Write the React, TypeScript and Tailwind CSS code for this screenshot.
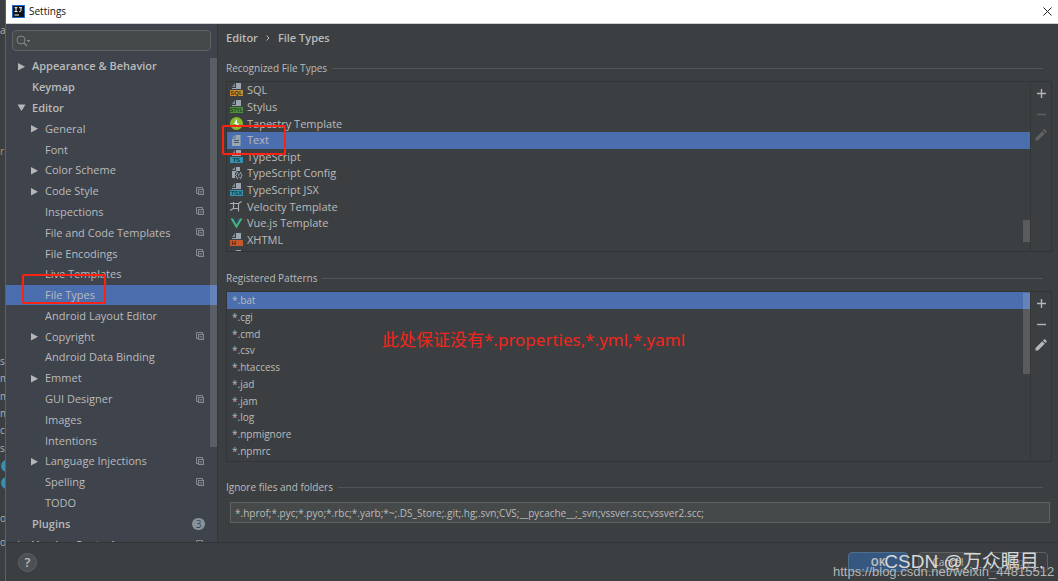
import React from "react";

type TreeRow = {
  label: string;
  level: 0 | 1;
  arrow?: "right" | "down";
  shared?: boolean;
  badge?: string;
  selected?: boolean;
};

const tree: TreeRow[] = [
  { label: "Appearance & Behavior", level: 0, arrow: "right" },
  { label: "Keymap", level: 0 },
  { label: "Editor", level: 0, arrow: "down" },
  { label: "General", level: 1, arrow: "right" },
  { label: "Font", level: 1 },
  { label: "Color Scheme", level: 1, arrow: "right" },
  { label: "Code Style", level: 1, arrow: "right", shared: true },
  { label: "Inspections", level: 1, shared: true },
  { label: "File and Code Templates", level: 1, shared: true },
  { label: "File Encodings", level: 1, shared: true },
  { label: "Live Templates", level: 1 },
  { label: "File Types", level: 1, selected: true },
  { label: "Android Layout Editor", level: 1 },
  { label: "Copyright", level: 1, arrow: "right", shared: true },
  { label: "Android Data Binding", level: 1 },
  { label: "Emmet", level: 1, arrow: "right" },
  { label: "GUI Designer", level: 1, shared: true },
  { label: "Images", level: 1 },
  { label: "Intentions", level: 1 },
  { label: "Language Injections", level: 1, arrow: "right", shared: true },
  { label: "Spelling", level: 1, shared: true },
  { label: "TODO", level: 1 },
  { label: "Plugins", level: 0, badge: "3" },
  { label: "Version Control", level: 0, arrow: "right", shared: true },
];

function Arrow({ dir }: { dir: "right" | "down" }) {
  return (
    <svg width="9" height="9" viewBox="0 0 9 9" fill="#b4b6b8" aria-hidden="true">
      {dir === "right" ? <path d="M1 1v7.500L8 4.700z" /> : <path d="M.5 1.500h8L4.500 8z" />}
    </svg>
  );
}

function SharedIcon() {
  return (
    <svg width="9" height="9" viewBox="0 0 9 9" fill="none" stroke="#858a91" aria-hidden="true">
      <path d="M2 6.500H.5v-6h6V2" />
      <rect x="2.500" y="2.500" width="5" height="5" />
      <path d="M3.500 4.500h3M3.500 6h3" strokeWidth=".7" />
    </svg>
  );
}

function FileShape() {
  return (
    <>
      <path d="M6 0h5v6H2V5h4z" fill="#9aa7b0" />
      <path d="M5 0v4H2z" fill="#9aa7b0" opacity=".7" />
    </>
  );
}

function Tagged({ color, tag, ink }: { color: string; tag: string; ink: string }) {
  return (
    <svg width="13" height="14" viewBox="0 0 13 14" aria-hidden="true">
      <FileShape />
      <rect x="0" y="7" width="13" height="6" fill={color} />
      <text
        x={tag.length === 1 ? 1.5 : 6.5}
        y="12.300"
        textAnchor={tag.length === 1 ? "start" : "middle"}
        fontSize={tag.length === 4 ? 5 : 6}
        fontWeight="700"
        fontFamily="Liberation Sans, sans-serif"
        fill={ink}
      >
        {tag}
      </text>
    </svg>
  );
}

function TypeIcon({ kind }: { kind: string }) {
  switch (kind) {
    case "sql":
      return <Tagged color="#c48a34" tag="SQL" ink="#4b3411" />;
    case "styl":
      return <Tagged color="#4c9040" tag="STYL" ink="#1d3d18" />;
    case "ts":
      return <Tagged color="#3591b1" tag="TS" ink="#123d4c" />;
    case "tsx":
      return <Tagged color="#3591b1" tag="TSX" ink="#123d4c" />;
    case "h":
      return <Tagged color="#c3582b" tag="H" ink="#4a1e0c" />;
    case "tapestry":
      return (
        <svg width="13" height="13" viewBox="0 0 13 13" aria-hidden="true">
          <circle cx="6.500" cy="6.500" r="6.500" fill="#84b92b" />
          <path d="M7 1.500L4 7h2.500v4L9 6.500H7z" fill="#fff" />
        </svg>
      );
    case "text":
      return (
        <svg width="13" height="13" viewBox="0 0 13 13" aria-hidden="true">
          <path d="M5.500 1H10.500v11H2V5h3.500z" fill="#9aa7b0" />
          <path d="M4.700 1v3.200H2z" fill="#9aa7b0" opacity=".8" />
          <path d="M4 6.500h5M4 8.500h5" stroke="#3f4a5f" strokeWidth=".9" />
        </svg>
      );
    case "config":
      return (
        <svg width="13" height="14" viewBox="0 0 13 14" fill="none" aria-hidden="true">
          <path d="M6 1h4v4H7L5 7v5H2V5h4z" fill="#9aa7b0" />
          <path d="M5 1v3H2z" fill="#9aa7b0" opacity=".8" />
          <path
            d="M7.800 6.300c-1.500 0-.7 2.200-2 3.200 1.300 1 .5 3.200 2 3.200M10 6.300c1.500 0 .7 2.200 2 3.200-1.300 1-.5 3.200-2 3.200M8.900 7.500v2.200M8.900 10.800v1"
            stroke="#b3bcc3"
          />
        </svg>
      );
    case "velocity":
      return (
        <svg width="13" height="13" viewBox="0 0 13 13" fill="none" stroke="#aab0b5" aria-hidden="true">
          <path d="M0 3.500h3.500M3.500 2v6.500h5v-5h-5M8.500 3.500l3-2M8.500 3v8.500M0 10.500l3.500-2" strokeWidth="1.100" />
        </svg>
      );
    case "vue":
      return (
        <svg width="13" height="13" viewBox="0 0 13 13" aria-hidden="true">
          <path d="M.5 1.500h3l3 5.500 3-5.500h3l-6 10z" fill="#41b883" />
          <path d="M3 1.500h2.200l1.300 2.300 1.300-2.300H10L6.500 7.700z" fill="#35495e" />
        </svg>
      );
    default:
      return (
        <svg width="13" height="14" viewBox="0 0 13 14" aria-hidden="true">
          <FileShape />
        </svg>
      );
  }
}

const fileTypes: [string, string][] = [
  ["sql", "SQL"],
  ["styl", "Stylus"],
  ["tapestry", "Tapestry Template"],
  ["text", "Text"],
  ["ts", "TypeScript"],
  ["config", "TypeScript Config"],
  ["tsx", "TypeScript JSX"],
  ["velocity", "Velocity Template"],
  ["vue", "Vue.js Template"],
  ["h", "XHTML"],
  ["file", "XML"],
];

const patterns = ["*.bat", "*.cgi", "*.cmd", "*.csv", "*.htaccess", "*.jad", "*.jam", "*.log", "*.npmignore", "*.npmrc"];

function Heading({ children }: { children: React.ReactNode }) {
  return (
    <div className="flex h-4 shrink-0 items-center gap-[5px] pr-[9px]">
      <h2 className="whitespace-nowrap text-[10px]">{children}</h2>
      <div className="h-px flex-1 bg-[#515557]" />
    </div>
  );
}

function Tools({ muted }: { muted: boolean }) {
  const rest = muted ? "text-[#5f6163]" : "text-[#b4b6b8]";
  return (
    <div className="flex w-[21px] shrink-0 flex-col items-center gap-[7px] border-l border-[#353839] pt-1">
      <button aria-label="Add" className="flex h-[14px] w-[14px] items-center justify-center text-[#b4b6b8]">
        <svg width="9" height="9" viewBox="0 0 9 9" stroke="currentColor" strokeWidth="1.400">
          <path d="M4.500 0v9M0 4.500h9" />
        </svg>
      </button>
      <button aria-label="Remove" className={`flex h-[14px] w-[14px] items-center justify-center ${rest}`}>
        <svg width="9" height="9" viewBox="0 0 9 9" stroke="currentColor" strokeWidth="1.400">
          <path d="M0 4.500h9" />
        </svg>
      </button>
      <button aria-label="Edit" className={`flex h-[14px] w-[14px] items-center justify-center ${rest}`}>
        <svg width="12" height="12" viewBox="0 0 12 12" fill="currentColor">
          <path d="M.5 9L7.300 2.200l2.500 2.500L3 11.500H.5zM8 1.500L9 .6c.4-.4.9-.4 1.300 0l1.100 1.100c.4.400.4.900 0 1.300l-.9.900z" />
        </svg>
      </button>
    </div>
  );
}

const behind: { text: string; className: string }[] = [
  { text: "a", className: "top-[22px] text-[#a9b0b5]" },
  { text: "r", className: "top-[143px] text-[#cc8a4a]" },
  { text: "sa", className: "top-[353px] text-[#a9b0b5]" },
  { text: "m", className: "top-[370px] text-[#a9b0b5]" },
  { text: "m", className: "top-[388px] text-[#a9b0b5]" },
  { text: "m", className: "top-[405px] text-[#a9b0b5]" },
  { text: "c", className: "top-[422px] text-[#a9b0b5]" },
  { text: "s", className: "top-[440px] text-[#a9b0b5]" },
  { text: "o", className: "top-[510px] text-[#a9b0b5]" },
  { text: "o", className: "top-[534px] text-[#a9b0b5]" },
];

export default function App() {
  return (
    <div className="relative flex h-screen overflow-hidden bg-[#3c3f41] font-['Open_Sans','Noto_Sans_CJK_SC',sans-serif] text-[11px] leading-4 text-[#bbbbbb]">
      <div className="relative w-[5px] shrink-0 overflow-hidden" aria-hidden="true">
        {behind.map((b, i) => (
          <span key={i} className={`absolute left-0 text-[10px] ${b.className}`}>
            {b.text}
          </span>
        ))}
        <span className="absolute left-px top-[460px] h-3 w-3 rounded-full bg-[#3b8eac]" />
        <span className="absolute left-px top-[477px] h-3 w-3 rounded-full bg-[#3b8eac]" />
      </div>

      <div className="flex min-w-0 flex-1 flex-col border-l border-[#2a6ea6]">
        <header className="flex h-6 shrink-0 items-center gap-1 border-b border-[#d0d0d0] bg-white pb-px pl-[6px] pr-[5px] text-[#111111]">
          <svg width="13" height="13" viewBox="0 0 13 13" aria-hidden="true">
            <rect width="13" height="13" fill="#1e6fd0" />
            <rect x="1" y="1" width="11" height="11" fill="#101014" />
            <path d="M2.500 2.700h3M4 2.700v4M2.500 6.600h3M7 2.700h3M9 2.700v3c0 .9-.9 1.100-2 .8M2.500 10h4.500" stroke="#fff" fill="none" />
          </svg>
          <h1 className="flex-1 text-[10px]">Settings</h1>
          <button aria-label="Close" className="flex h-[11px] w-[11px] items-center justify-center">
            <svg width="9" height="9" viewBox="0 0 9 9" stroke="#222" strokeWidth="1">
              <path d="M.5.5l8 8M8.500.5l-8 8" />
            </svg>
          </button>
        </header>

        <div className="flex min-h-0 flex-1">
          <aside className="relative flex w-[212px] shrink-0 flex-col border-r border-[#35383b] bg-[#3e434c]">
            <label className="mx-[6px] mt-[6px] flex h-[21px] shrink-0 items-center rounded-sm border border-[#5e6365] bg-[#45494a] pl-[3px]">
              <svg width="15" height="12" viewBox="0 0 15 12" fill="none" stroke="#84898b" aria-hidden="true">
                <circle cx="5" cy="5" r="4" />
                <path d="M8 8l3 3" strokeWidth="1.300" />
                <path d="M10.500 5h4l-2 2.200z" fill="#84898b" stroke="none" />
              </svg>
              <input aria-label="Search settings" className="min-w-0 flex-1 bg-transparent outline-none" />
            </label>
            <div className="mt-[5px] min-h-0 flex-1 overflow-hidden">
              <ul role="tree" className="grid h-[499px] auto-rows-fr">
                {tree.map((row) => (
                  <li
                    key={row.label}
                    role="treeitem"
                    aria-selected={!!row.selected}
                    className={`flex min-h-0 items-center pr-3 ${row.level === 0 ? "pl-[11px] font-semibold" : "pl-6"} ${
                      row.selected ? "bg-[#4b6eaf]" : ""
                    }`}
                  >
                    <span className="w-[15px] shrink-0">{row.arrow && <Arrow dir={row.arrow} />}</span>
                    <span className="flex-1 whitespace-nowrap">{row.label}</span>
                    {row.shared && <SharedIcon />}
                    {row.badge && (
                      <span className="flex h-3 w-[13px] items-center justify-center rounded-full bg-[#87939a] text-[10px] font-normal text-[#3e434c]">
                        {row.badge}
                      </span>
                    )}
                  </li>
                ))}
              </ul>
            </div>
            <div className="absolute right-0 top-[34px] h-[389px] w-[7px] bg-white/15" />
          </aside>

          <main className="flex min-w-0 flex-1 flex-col pb-[19px] pl-2 pr-[6px]">
            <nav className="flex h-[27px] shrink-0 items-center gap-[8px] font-semibold">
              <span>Editor</span>
              <svg width="4" height="6" viewBox="0 0 4 6" fill="none" stroke="#bbb" aria-hidden="true">
                <path d="M.5.5L3 3 .5 5.500" />
              </svg>
              <span>File Types</span>
            </nav>

            <section className="mt-[9px] flex min-h-0 flex-1 flex-col gap-[5px]">
              <Heading>Recognized File Types</Heading>
              <div className="flex min-h-0 flex-1 border border-[#323537]">
                <div className="relative min-w-0 flex-1 overflow-hidden">
                  <ul role="listbox" aria-label="Recognized File Types" className="grid h-[183px] auto-rows-fr">
                    {fileTypes.map(([kind, label]) => (
                      <li
                        key={label}
                        role="option"
                        aria-selected={kind === "text"}
                        className={`flex min-h-0 items-center gap-1 pl-[3px] ${kind === "text" ? "bg-[#4b6eaf]" : ""}`}
                      >
                        <TypeIcon kind={kind} />
                        <span>{label}</span>
                      </li>
                    ))}
                  </ul>
                  <div className="absolute bottom-[9px] right-0 h-[22px] w-[7px] bg-white/15" />
                </div>
                <Tools muted />
              </div>
            </section>

            <section className="mt-[18px] flex min-h-0 flex-1 flex-col gap-[5px]">
              <Heading>Registered Patterns</Heading>
              <div className="flex min-h-0 flex-1 border border-[#323537]">
                <div className="relative min-w-0 flex-1 overflow-hidden">
                  <ul role="listbox" aria-label="Registered Patterns" className="grid h-[167px] auto-rows-fr text-[10px]">
                    {patterns.map((p, i) => (
                      <li
                        key={p}
                        role="option"
                        aria-selected={i === 0}
                        className={`flex min-h-0 items-center pl-[5px] ${i === 0 ? "bg-[#4b6eaf]" : ""}`}
                      >
                        {p}
                      </li>
                    ))}
                  </ul>
                  <div className="absolute right-0 top-px h-[81px] w-[7px] bg-white/15" />
                  <p className="absolute left-[155px] top-9 whitespace-nowrap font-['Noto_Sans','Noto_Sans_CJK_SC',sans-serif] text-[17px] leading-6 text-[#f0261c]">
                    此处保证没有*.properties,*.yml,*.yaml
                  </p>
                </div>
                <Tools muted={false} />
              </div>
            </section>

            <section className="mt-[17px] flex shrink-0 flex-col gap-[7px]">
              <Heading>Ignore files and folders</Heading>
              <div className="flex pl-1 pr-[2px]">
                <input
                  aria-label="Ignore files and folders"
                  defaultValue="*.hprof;*.pyc;*.pyo;*.rbc;*.yarb;*~;.DS_Store;.git;.hg;.svn;CVS;__pycache__;_svn;vssver.scc;vssver2.scc;"
                  className="h-[21px] min-w-0 flex-1 border border-[#5e6162] bg-[#45494a] px-1 text-[10px] outline-none"
                />
              </div>
            </section>
          </main>
        </div>

        <footer className="flex h-[39px] shrink-0 items-center border-t border-[#323537] pl-3 pr-[10px]">
          <button
            aria-label="Help"
            className="flex h-[19px] w-[19px] items-center justify-center rounded-full border border-[#5e6162] bg-[#4c5052] text-[13px] font-semibold"
          >
            ?
          </button>
          <div className="ml-auto flex gap-[10px]">
            <button className="h-5 w-[60px] rounded-sm border border-[#4c708c] bg-[#365880] text-[10px] font-bold">OK</button>
            <button className="h-5 w-[60px] rounded-sm border border-[#5e6162] bg-[#45494b] text-[10px]">Cancel</button>
            <button className="h-5 w-[60px] rounded-sm border border-[#5e6162] text-[10px] text-[#777777]">Apply</button>
          </div>
        </footer>
      </div>

      <div className="absolute left-[22px] top-[274px] h-[30px] w-[84px] rounded-xs border-2 border-[#fb2314]" />
      <div className="absolute left-[222px] top-[125px] h-[30px] w-[64px] rounded-xs border-2 border-[#fb2314]" />
      <p className="absolute bottom-[7px] right-[14px] whitespace-nowrap font-['Liberation_Sans','Noto_Sans_CJK_SC',sans-serif] text-[19px] leading-6 text-[#d8d8d8]">
        CSDN @万众瞩目.
      </p>
      <p className="absolute bottom-0 left-[833px] whitespace-nowrap font-['Liberation_Sans',sans-serif] text-[13px] leading-[18px] text-[#b4b6b8]">
        https://blog.csdn.net/weixin_44815512
      </p>
    </div>
  );
}
